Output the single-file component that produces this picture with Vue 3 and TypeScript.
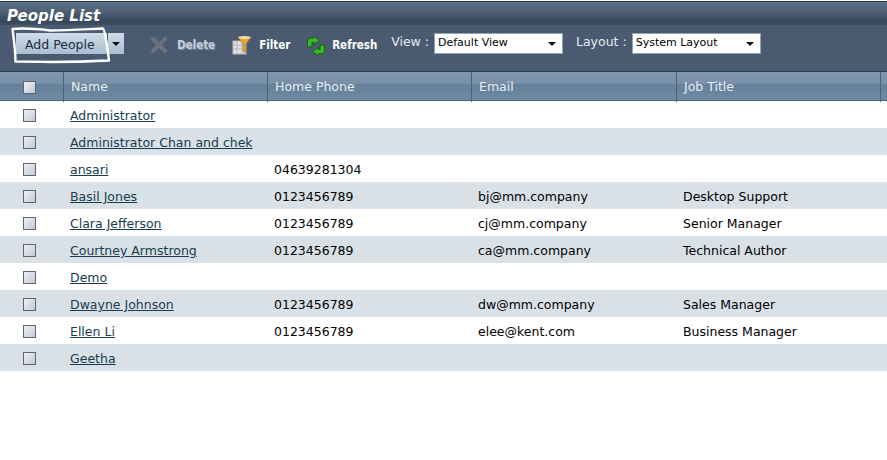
<template>
  <div class="page">
    <!-- Title -->
    <div class="title-bar">People List</div>

    <!-- Toolbar -->
    <div class="toolbar">
      <div class="add-btn">Add People</div>
      <div class="add-arrow"><span class="caret"></span></div>

      <svg class="icon-delete" width="18" height="18" viewBox="0 0 18 18">
        <path d="M3 3 L15 15 M15 3 L3 15" stroke="#6b727c" stroke-width="4.2" stroke-linecap="round" fill="none" />
      </svg>
      <span class="tool-text disabled">Delete</span>

      <svg class="icon-filter" width="20" height="20" viewBox="0 0 20 20">
        <rect x="1" y="6" width="13" height="13" fill="#e6e3dc" stroke="#b9b6c8" />
        <path d="M1 10 H14 M1 14 H14 M5 6 V19 M10 6 V19" stroke="#b5b5cc" stroke-width="1" />
        <path d="M6 2 H19 L14 9 V18 L11 16 V9 Z" fill="#e0a63c" stroke="#a8772a" stroke-width="0.7" />
        <ellipse cx="12.5" cy="2.6" rx="6.2" ry="1.6" fill="#f4dc9a" />
      </svg>
      <span class="tool-text filter-text">Filter</span>

      <svg class="icon-refresh" width="20" height="20" viewBox="0 0 20 20">
        <path d="M1.5 11 V5 Q1.5 2 5 2 H8 V0.5 L13.5 4.5 L8 8.5 V6.5 H6 V11 Z" fill="#36b824" stroke="#12600f" stroke-width="0.9" stroke-linejoin="round" />
        <path d="M18.5 9 V15 Q18.5 18 15 18 H12 V19.5 L6.5 15.5 L12 11.5 V13.5 H14 V9 Z" fill="#36b824" stroke="#12600f" stroke-width="0.9" stroke-linejoin="round" />
      </svg>
      <span class="tool-text refresh-text">Refresh</span>

      <span class="select-label view-label">View :</span>
      <div class="fake-select">Default View<span class="caret"></span></div>
      <span class="select-label layout-label">Layout :</span>
      <div class="fake-select">System Layout<span class="caret"></span></div>
    </div>

    <!-- Hand-drawn highlight over the add button -->
    <svg class="scribble" width="120" height="70" viewBox="0 0 120 70">
      <path
        d="M12.5 29 C22 28 34 28.5 50 30.5 C70 30.5 90 29 103 28.5 C105.5 31 106.5 42 109 60.5 C90 61.5 68 62 50 62 C38 61.5 26 61.5 15.5 61.5 C15.5 50 13.5 38 12.5 29 Z"
        fill="none"
        stroke="#fff"
        stroke-width="2.4"
        stroke-linejoin="round"
      />
    </svg>

    <!-- Grid header -->
    <div class="row head">
      <div class="cell check"><span class="box"></span></div>
      <div v-for="col in columns" :key="col" class="cell sep">{{ col }}</div>
      <div class="cell sep"></div>
    </div>

    <!-- Rows -->
    <div v-for="(person, i) in people" :key="person.name" class="row body" :class="{ alt: i % 2 === 1 }">
      <div class="cell check"><span class="box"></span></div>
      <div class="cell"><a class="name">{{ person.name }}</a></div>
      <div class="cell">{{ person.phone }}</div>
      <div class="cell">{{ person.email }}</div>
      <div class="cell">{{ person.job }}</div>
      <div class="cell"></div>
    </div>
  </div>
</template>

<script setup lang="ts">
interface Person {
  name: string
  phone?: string
  email?: string
  job?: string
}

const columns: string[] = ['Name', 'Home Phone', 'Email', 'Job Title']

const people: Person[] = [
  { name: 'Administrator' },
  { name: 'Administrator Chan and chek' },
  { name: 'ansari', phone: '04639281304' },
  { name: 'Basil Jones', phone: '0123456789', email: 'bj@mm.company', job: 'Desktop Support' },
  { name: 'Clara Jefferson', phone: '0123456789', email: 'cj@mm.company', job: 'Senior Manager' },
  { name: 'Courtney Armstrong', phone: '0123456789', email: 'ca@mm.company', job: 'Technical Author' },
  { name: 'Demo' },
  { name: 'Dwayne Johnson', phone: '0123456789', email: 'dw@mm.company', job: 'Sales Manager' },
  { name: 'Ellen Li', phone: '0123456789', email: 'elee@kent.com', job: 'Business Manager' },
  { name: 'Geetha' }
]
</script>

<style>
html,
body {
  background: #fff;
}
</style>

<style scoped>
.page {
  position: relative;
  width: 887px;
  height: 460px;
  overflow: hidden;
  background: #fff;
  font-family: "DejaVu Sans", Verdana, sans-serif;
  font-size: 12.5px;
  color: #000;
}

.title-bar {
  height: 24px;
  margin-top: 1px;
  box-sizing: border-box;
  border-top: 1px solid #2a3a4c;
  padding: 5px 0 0 7px;
  background: linear-gradient(#5d6f84 0, #54667b 30%, #37485c 85%, #3f5065 100%);
  color: #fff;
  font-size: 15px;
  line-height: 18px;
  font-weight: bold;
  font-style: italic;
}

.toolbar {
  height: 46px;
  display: flex;
  align-items: flex-start;
  box-sizing: border-box;
  padding: 8px 0 0 16px;
  background: #4a5a70;
  color: #fff;
}

.add-btn {
  width: 91px;
  height: 21px;
  box-sizing: border-box;
  padding-left: 9px;
  line-height: 23px;
  color: #1c2c3c;
  background: linear-gradient(#cfdde8, #a9bfd0);
}

.add-arrow {
  width: 16px;
  height: 21px;
  margin-left: 1px;
  display: flex;
  align-items: center;
  justify-content: center;
  background: linear-gradient(#cfdde8, #a9bfd0);
}

.caret {
  display: block;
  width: 0;
  height: 0;
  border-left: 4px solid transparent;
  border-right: 4px solid transparent;
  border-top: 4px solid #111;
}

.icon-delete {
  margin: 3px 0 0 26px;
}

.tool-text {
  font-family: "DejaVu Sans Condensed", "DejaVu Sans", sans-serif;
  font-weight: bold;
  font-size: 11.5px;
  line-height: 24px;
}

.tool-text.disabled {
  margin-left: 9px;
  color: #c2cfdd;
  text-shadow: 1px 1px 0 #7f8b9a;
}

.icon-filter {
  margin: 2px 0 0 17px;
}

.filter-text {
  margin-left: 7px;
  width: 29px;
}

.icon-refresh {
  margin: 3px 0 0 18px;
}

.refresh-text {
  margin-left: 6px;
  width: 44px;
}

.select-label {
  line-height: 18px;
  color: #e6ecf2;
}

.view-label {
  margin-left: 15px;
}

.layout-label {
  margin-left: 13px;
}

.fake-select {
  width: 129px;
  height: 21px;
  margin-left: 5px;
  box-sizing: border-box;
  border: 1px solid #8fa2b8;
  background: #fff;
  color: #000;
  font-size: 11px;
  line-height: 17px;
  padding-left: 3px;
  display: flex;
  justify-content: space-between;
}

.fake-select .caret {
  margin: 8px 6px 0 0;
}

.scribble {
  position: absolute;
  left: 0;
  top: 0;
}

.row {
  display: grid;
  grid-template-columns: 63px 204px 204px 205px 204px 1fr;
}

.head {
  height: 30px;
  box-sizing: border-box;
  border-top: 1px solid #2e3e50;
  border-bottom: 1px solid #4b6074;
  background: linear-gradient(#7f96ae 0, #7990a8 40%, #64809a 45%, #6f8ba3 100%);
  color: #e8eef4;
  line-height: 30px;
}

.head .cell {
  padding-left: 7px;
}

.head .sep {
  border-left: 1px solid #4b6074;
}

.body {
  height: 27px;
  line-height: 29px;
}

.body.alt {
  background: #dae1e6;
}

.cell {
  box-sizing: border-box;
  padding-left: 7px;
  white-space: nowrap;
}

.cell.check {
  display: flex;
  align-items: center;
  padding-left: 23px;
}

.box {
  display: block;
  width: 13px;
  height: 13px;
  box-sizing: border-box;
  border: 1px solid #5d6672;
  background: linear-gradient(135deg, #eef1f5, #c3cad4);
}

.name {
  color: #173c50;
  text-decoration: underline;
}
</style>
